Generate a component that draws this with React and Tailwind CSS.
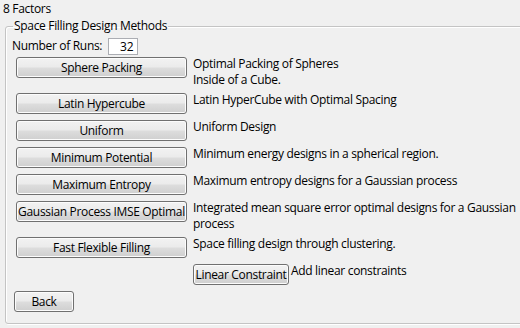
import React from 'react';

const methods = [
  { label: 'Sphere Packing', desc: ['Optimal Packing of Spheres', 'Inside of a Cube.'] },
  { label: 'Latin Hypercube', desc: ['Latin HyperCube with Optimal Spacing'] },
  { label: 'Uniform', desc: ['Uniform Design'] },
  { label: 'Minimum Potential', desc: ['Minimum energy designs in a spherical region.'] },
  { label: 'Maximum Entropy', desc: ['Maximum entropy designs for a Gaussian process'] },
  { label: 'Gaussian Process IMSE Optimal', desc: ['Integrated mean square error optimal designs for a Gaussian', 'process'] },
  { label: 'Fast Flexible Filling', desc: ['Space filling design through clustering.'] },
];

const WinButton = ({ children, className = '' }) => (
  <button
    className={`h-[21px] whitespace-nowrap rounded-[3px] border border-[#707070] bg-[linear-gradient(#f2f2f2,#ebebeb_48%,#dddddd_52%,#cfcfcf)] text-[12px] leading-none text-black shadow-[inset_0_0_0_1px_#fcfcfc] ${className}`}
  >
    {children}
  </button>
);

export default function App() {
  return (
    <div
      className="w-[520px] h-[328px] bg-[#f0f0f0] text-[12px] tracking-[-0.32px] text-black overflow-hidden"
      style={{ fontFamily: '"Open Sans", "Noto Sans", sans-serif' }}
    >
      <div className="pl-[3px] h-[17px] leading-[17px]">8 Factors</div>
      <fieldset className="ml-[5px] mt-[1px] w-[512px] h-[306px] border border-[#c4c4c4] rounded-[3px] shadow-[inset_1px_1px_0_#fff,1px_1px_0_#fff] px-[6px]">
        <legend className="ml-[1px] px-[1px] leading-[16px]">Space Filling Design Methods</legend>
        <div className="flex items-center gap-[6px] mt-[3px] h-[18px]">
          <span className="leading-[16px]">Number of Runs:</span>
          <div className="w-[30px] h-[17px] bg-white border border-[#abadb3] text-right pr-[4px] leading-[15px]">32</div>
        </div>
        <div className="flex flex-col mt-[2px] pl-[4px]">
          {methods.map((m) => (
            <div
              key={m.label}
              className={`flex items-start gap-[6px] ${m.desc.length > 1 ? 'h-[36px]' : 'h-[27px]'}`}
            >
              <WinButton className="w-[171px] shrink-0">{m.label}</WinButton>
              <div className="leading-[16px] -mt-[1px]">
                {m.desc.map((d) => (
                  <div key={d} className="whitespace-nowrap">{d}</div>
                ))}
              </div>
            </div>
          ))}
          <div className="flex items-start gap-[2px] pl-[177px] h-[27px]">
            <WinButton className="w-[96px]">Linear Constraint</WinButton>
            <span className="leading-[16px] -mt-[1px]">Add linear constraints</span>
          </div>
        </div>
        <div className="pl-[2px]">
          <WinButton className="w-[60px]">Back</WinButton>
        </div>
      </fieldset>
    </div>
  );
}
